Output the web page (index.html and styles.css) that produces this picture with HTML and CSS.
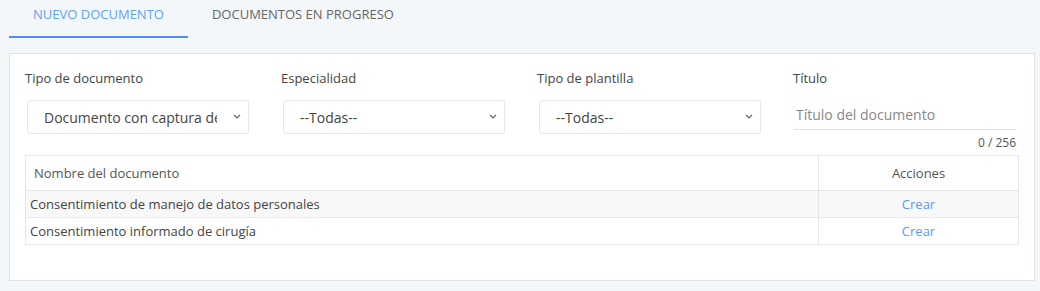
FILE: index.html
```html
<!DOCTYPE html>
<html lang="es">
<head>
    <meta charset="UTF-8">
    <meta name="viewport" content="width=device-width, initial-scale=1.0">
    <title>Documentos</title>
    <link rel="stylesheet" href="styles.css">
</head>
<body>

    <div class="tabs">
        <a class="tab active">NUEVO DOCUMENTO</a>
        <a class="tab">DOCUMENTOS EN PROGRESO</a>
    </div>

    <div class="panel">
        <div class="filters">
            <div class="field">
                <label>Tipo de documento</label>
                <div class="select-wrap">
                    <select>
                        <option>Documento con captura de datos</option>
                    </select>
                    <svg class="chevron" width="8" height="5" viewBox="0 0 8 5"><path d="M1 1l3 3 3-3" fill="none" stroke="#666" stroke-width="1.2"/></svg>
                </div>
            </div>
            <div class="field">
                <label>Especialidad</label>
                <div class="select-wrap">
                    <select>
                        <option>--Todas--</option>
                    </select>
                    <svg class="chevron" width="8" height="5" viewBox="0 0 8 5"><path d="M1 1l3 3 3-3" fill="none" stroke="#666" stroke-width="1.2"/></svg>
                </div>
            </div>
            <div class="field">
                <label>Tipo de plantilla</label>
                <div class="select-wrap">
                    <select>
                        <option>--Todas--</option>
                    </select>
                    <svg class="chevron" width="8" height="5" viewBox="0 0 8 5"><path d="M1 1l3 3 3-3" fill="none" stroke="#666" stroke-width="1.2"/></svg>
                </div>
            </div>
            <div class="field">
                <label>Título</label>
                <input type="text" class="title-input" placeholder="Título del documento">
                <div class="counter">0 / 256</div>
            </div>
        </div>

        <table class="docs">
            <thead>
                <tr>
                    <th class="name">Nombre del documento</th>
                    <th class="actions">Acciones</th>
                </tr>
            </thead>
            <tbody>
                <tr>
                    <td>Consentimiento de manejo de datos personales</td>
                    <td class="actions"><a href="#">Crear</a></td>
                </tr>
                <tr>
                    <td>Consentimiento informado de cirugía</td>
                    <td class="actions"><a href="#">Crear</a></td>
                </tr>
            </tbody>
        </table>
    </div>

</body>
</html>
```

FILE: styles.css
```css
body {
    font-family: "Open Sans", Arial, sans-serif;
    background-color: #f4f7fa;
    color: #444;
    margin: 0;
    padding: 0 5px 0 9px;
}

.tabs {
    display: flex;
}

.tab {
    padding: 0 24px 8px;
    line-height: 28px;
    font-size: 13px;
    color: #666;
    border-bottom: 2px solid transparent;
    cursor: pointer;
}

.tab.active {
    color: #5ea2f6;
    border-bottom-color: #4c8ff0;
}

.panel {
    margin-top: 15px;
    background-color: #fff;
    border: 1px solid #dfe3e8;
    padding: 15px 15px 0;
}

.filters {
    display: grid;
    grid-template-columns: 225px 225px 225px 1fr;
    column-gap: 31px;
}

.field label {
    display: block;
    font-size: 13px;
    line-height: 18px;
    color: #444;
    margin-bottom: 13px;
}

.select-wrap {
    position: relative;
    margin-left: 2px;
    width: 222px;
}

select {
    display: block;
    width: 222px;
    height: 34px;
    padding: 0 31px 0 16px;
    font-family: inherit;
    font-size: 14px;
    color: #444;
    background-color: #fff;
    border: 1px solid #e3e6ea;
    border-radius: 3px;
    outline: none;
    appearance: none;
    -webkit-appearance: none;
}

.chevron {
    position: absolute;
    right: 8px;
    top: 14px;
    pointer-events: none;
}

.title-input {
    display: block;
    box-sizing: border-box;
    margin-left: 1px;
    width: 222px;
    height: 30px;
    padding: 0 2px;
    border: none;
    border-bottom: 1px solid #e3e3e3;
    font-family: inherit;
    font-size: 14px;
    color: #444;
    outline: none;
}

.title-input::placeholder {
    color: #888;
}

.counter {
    text-align: right;
    font-size: 12px;
    color: #555;
    margin-top: 4px;
    margin-right: 3px;
    line-height: 17px;
}

.docs {
    width: 100%;
    border-collapse: collapse;
    margin: 4px 0 35px;
    font-size: 13px;
    border: 1px solid #e6e6e6;
}

.docs th {
    font-weight: normal;
    color: #555;
    height: 34px;
    text-align: left;
    padding: 0 8px;
    border-bottom: 1px solid #e6e6e6;
}

.docs td {
    height: 26px;
    padding: 0 4px;
    color: #444;
    border-bottom: 1px solid #e9e9e9;
}

.docs tbody tr:nth-child(odd) {
    background-color: #f8f8f8;
}

.docs th.actions,
.docs td.actions {
    width: 199px;
    padding: 0;
    text-align: center;
    border-left: 1px solid #e6e6e6;
}

.docs a {
    color: #5b9bf5;
    text-decoration: none;
}
```
